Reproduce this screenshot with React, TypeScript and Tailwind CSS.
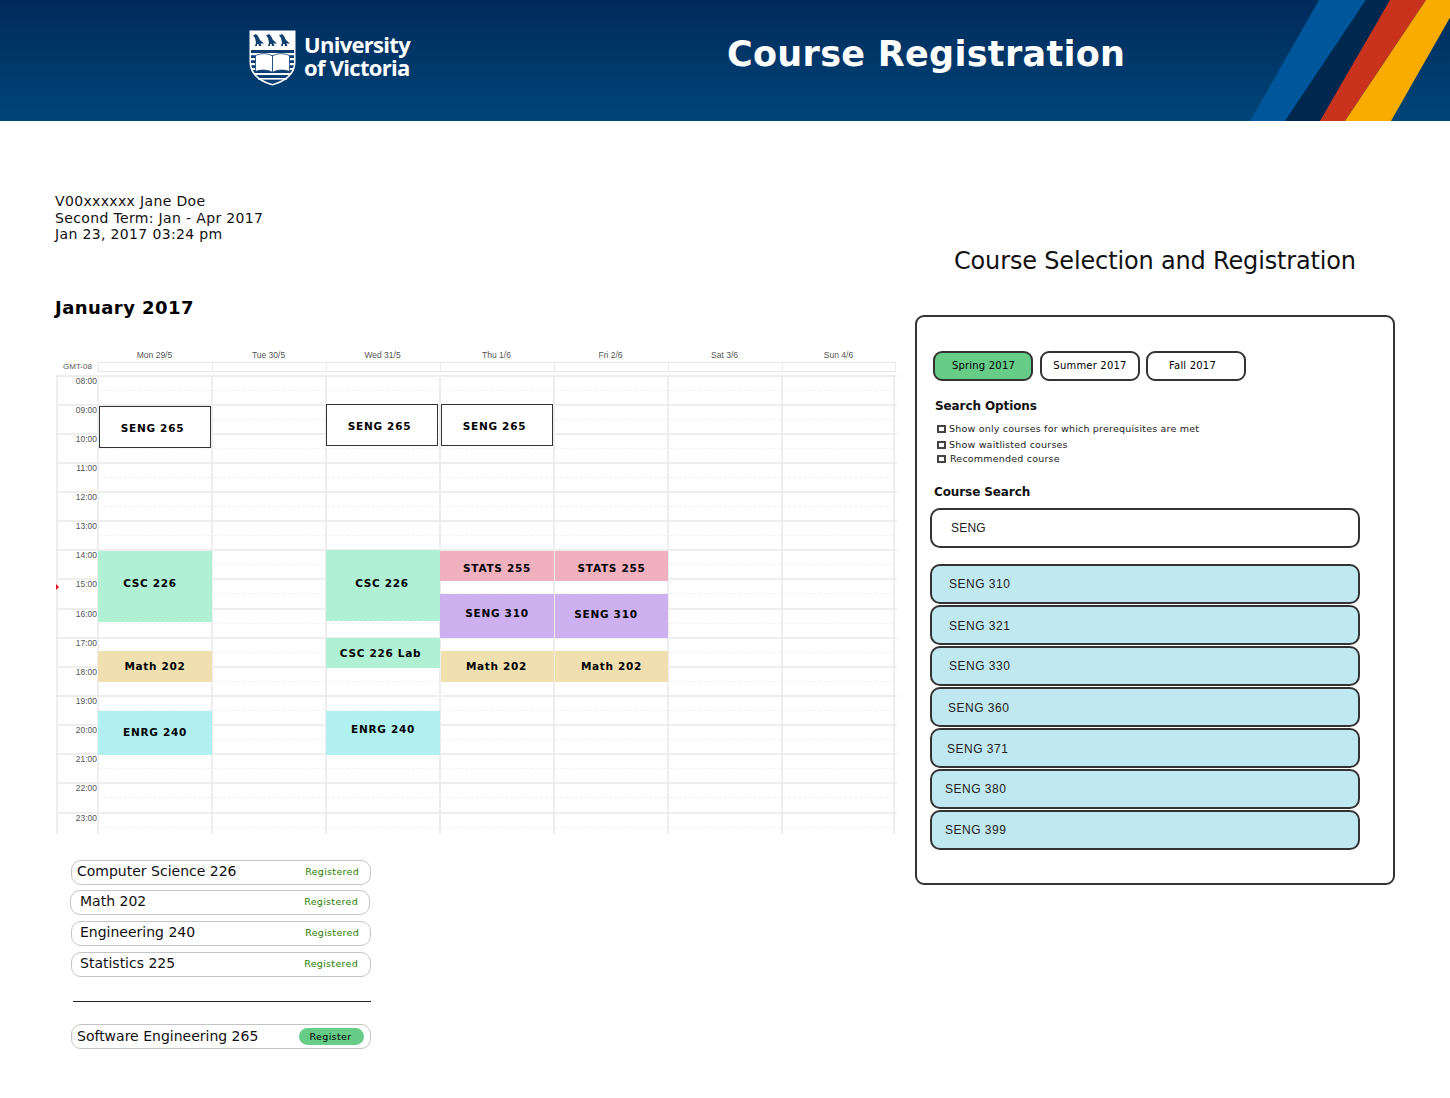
const hours = ["08:00","09:00","10:00","11:00","12:00","13:00","14:00","15:00","16:00","17:00","18:00","19:00","20:00","21:00","22:00","23:00"];
const days = ["Mon 29/5","Tue 30/5","Wed 31/5","Thu 1/6","Fri 2/6","Sat 3/6","Sun 4/6"];

// positions are relative to the grid body, which starts at x=58 y=376
const events = [
  { label: "SENG 265", box: "left-[41px] top-[31px] w-[112px] h-[42px] bg-white border-[1.5px] border-[#333]", text: "pr-[5px] pt-[4px]" },
  { label: "SENG 265", box: "left-[268px] top-[29px] w-[112px] h-[42px] bg-white border-[1.5px] border-[#333]", text: "pr-[5px] pt-[4px]" },
  { label: "SENG 265", box: "left-[383px] top-[29px] w-[112px] h-[42px] bg-white border-[1.5px] border-[#333]", text: "pr-[5px] pt-[4px]" },
  { label: "CSC 226", box: "left-[40px] top-[176px] w-[114px] h-[71px] bg-[#b0f0d5]", text: "pr-[10px] pb-[5px]" },
  { label: "CSC 226", box: "left-[268px] top-[175px] w-[114px] h-[71px] bg-[#b0f0d5]", text: "pr-[2px] pb-[3px]" },
  { label: "STATS 255", box: "left-[382px] top-[176px] w-[114px] h-[30px] bg-[#f0b0bd]", text: "pt-[6px]" },
  { label: "STATS 255", box: "left-[497px] top-[176px] w-[113px] h-[30px] bg-[#f0b0bd]", text: "pt-[6px]" },
  { label: "SENG 310", box: "left-[382px] top-[219px] w-[114px] h-[44px] bg-[#ccb0f0]", text: "pb-[3px]" },
  { label: "SENG 310", box: "left-[497px] top-[219px] w-[113px] h-[44px] bg-[#ccb0f0]", text: "pr-[11px] pb-[1px]" },
  { label: "CSC 226 Lab", box: "left-[268px] top-[263px] w-[114px] h-[30px] bg-[#b0f0d5]", text: "pr-[5px] pt-[2px]" },
  { label: "Math 202", box: "left-[40px] top-[276px] w-[114px] h-[31px] bg-[#f0e0b0]", text: "pt-[2px]" },
  { label: "Math 202", box: "left-[383px] top-[276px] w-[113px] h-[31px] bg-[#f0e0b0]", text: "pr-[2px] pt-[2px]" },
  { label: "Math 202", box: "left-[497px] top-[276px] w-[113px] h-[31px] bg-[#f0e0b0]", text: "pt-[2px]" },
  { label: "ENRG 240", box: "left-[40px] top-[336px] w-[114px] h-[44px] bg-[#b0f0f0]", text: "" },
  { label: "ENRG 240", box: "left-[268px] top-[336px] w-[114px] h-[44px] bg-[#b0f0f0]", text: "pb-[6px]" },
];

const registered = [
  { name: "Computer Science 226", row: "ml-[16px] mt-0", name2: "pl-[5px]", tag: "pr-[11px]" },
  { name: "Math 202", row: "ml-[15px] mt-[5px]", name2: "pl-[9px]", tag: "pr-[11px]" },
  { name: "Engineering 240", row: "ml-[16px] mt-[6px]", name2: "pl-[8px]", tag: "pr-[11px]" },
  { name: "Statistics 225", row: "ml-[16px] mt-[6px]", name2: "pl-[8px]", tag: "pr-[12px]" },
];

const results = [
  { name: "SENG 310", cls: "mt-[16px] pl-[17px] pb-[1px]" },
  { name: "SENG 321", cls: "mt-[1px] pl-[17px] pt-[1px]" },
  { name: "SENG 330", cls: "mt-[1px] pl-[17px]" },
  { name: "SENG 360", cls: "mt-[1px] pl-[16px] pt-[2px]" },
  { name: "SENG 371", cls: "mt-[1px] pl-[15px] pt-[1px]" },
  { name: "SENG 380", cls: "mt-[1px] pl-[13px]" },
  { name: "SENG 399", cls: "mt-[1px] pl-[13px]" },
];

function Shield() {
  return (
    <svg width="47" height="56" viewBox="0 0 47 56" className="shrink-0">
      <path d="M0.5 0.5H46.5V32C46.5 45 36 52 23.5 55.5C11 52 0.5 45 0.5 32Z" fill="#fff" />
      <path d="M2 20H45V32C45 44 35 50.5 23.5 54C12 50.5 2 44 2 32Z" fill="#0b3f74" />
      <g fill="#fff">
        <rect x="2" y="23" width="43" height="2.2" />
        <rect x="2" y="28" width="43" height="2.2" />
        <rect x="2" y="33" width="43" height="2.2" />
        <rect x="3" y="38" width="41" height="2" />
        <rect x="5" y="43" width="37" height="2" />
        <rect x="9" y="48" width="29" height="1.6" />
      </g>
      <path d="M6.5 25.5C12 23 19 23 23.5 26C28 23 35 23 40.5 25.5V41.5C35 39.5 28 39.5 23.5 42.5C19 39.5 12 39.5 6.5 41.5Z" fill="#fff" stroke="#0b3f74" strokeWidth="0.8" />
      <path d="M23.5 26V42.5" stroke="#0b3f74" strokeWidth="0.9" />
      <g fill="#12406f">
        <path d="M4 5.5L7 4L9 6L11 10L15 13.5L11.5 13.5L12.5 16H10L9.5 14H8L8 16H6L7 12.5L6 8Z" />
        <path d="M17 5.5L20 4L22 6L24 10L28 13.5L24.5 13.5L25.5 16H23L22.5 14H21L21 16H19L20 12.5L19 8Z" />
        <path d="M30 5.5L33 4L35 6L37 10L41 13.5L37.5 13.5L38.5 16H36L35.5 14H34L34 16H32L33 12.5L32 8Z" />
      </g>
    </svg>
  );
}

function Stripes() {
  return (
    <svg width="210" height="121" viewBox="1240 0 210 121" className="absolute right-0 top-0">
      <polygon points="1319,0 1366,0 1285,121 1250,121" fill="#00569a" />
      <polygon points="1366,0 1390,0 1320,121 1285,121" fill="#00284f" />
      <polygon points="1390,0 1426,0 1345,121 1320,121" fill="#c9321c" />
      <polygon points="1426,0 1460,0 1391,121 1345,121" fill="#f9ab00" />
    </svg>
  );
}

function Calendar() {
  return (
    <div className="w-[841px] ml-[1px] text-[#666] font-['Liberation_Sans',sans-serif]">
      <div className="flex pl-[42px] h-[13px] text-[8.5px] leading-[13px]">
        {days.map((d) => (
          <div key={d} className="w-[114px] text-center pr-[1px] text-[#555]">{d}</div>
        ))}
      </div>
      <div className="flex h-[11px] mt-[-1px]">
        <div className="w-[42px] pl-[7px] text-[8px] leading-[11px] text-[#555]">GMT-08</div>
        <div className="flex h-[10px] mt-[1px] border border-[#e8e8e8]">
          {days.map((d) => (
            <div key={d} className="w-[114px] border-r border-[#e8e8e8] last:border-r-0 last:w-[112px]" />
          ))}
        </div>
      </div>
      <div className="relative mt-[3px] border-l-2 border-[#eee] box-border">
        <div>
          {hours.map((h) => (
            <div key={h} className="flex h-[29.15px] last:h-[22px] border-t-2 border-[#eee] box-border">
              <div className="w-[39px] text-right text-[8.5px] leading-[8px] text-[#555]">{h}</div>
              {days.map((d) => (
                <div key={d} className="w-[114px] border-l-2 border-[#eee] last:border-r-2 box-border">
                  <div className="h-[14px] border-b border-dashed border-[#f2f2f2]" />
                </div>
              ))}
            </div>
          ))}
        </div>
        <div className="absolute left-[-2px] top-[209px] h-0 w-0 border-y-[3px] border-l-[3px] border-y-transparent border-l-[#e01020]" />
        {events.map((e, i) => (
          <div
            key={i}
            className={`absolute flex items-center justify-center box-border text-[10.5px] font-bold tracking-[0.7px] text-black font-['DejaVu_Sans',sans-serif] ${e.box} ${e.text}`}
          >
            {e.label}
          </div>
        ))}
      </div>
    </div>
  );
}

export default function App() {
  return (
    <div className="w-[1450px] h-[1098px] bg-white overflow-hidden font-['DejaVu_Sans',sans-serif] text-black">
      <header className="relative h-[121px] bg-gradient-to-b from-[#002a5c] to-[#004578] overflow-hidden flex items-center">
        <div className="flex items-center ml-[249px] mt-[-6px]">
          <Shield />
          <div className="ml-[8px] mt-[-4px] font-['Open_Sans',sans-serif] font-bold text-[22px] leading-[23px] tracking-[-0.7px] text-white">
            University<br />of Victoria
          </div>
        </div>
        <h1 className="ml-[317px] mt-[-12px] text-[35px] font-bold tracking-[0.3px] text-white">Course Registration</h1>
        <Stripes />
      </header>

      <div className="flex">
        <div className="w-[915px] pl-[55px] pt-[72px] shrink-0">
          <div className="text-[14px] leading-[16.5px] tracking-[0.35px] text-[#111]">
            <div>V00xxxxxx Jane Doe</div>
            <div>Second Term: Jan - Apr 2017</div>
            <div>Jan 23, 2017 03:24 pm</div>
          </div>
          <h2 className="mt-[53px] text-[18px] leading-[24px] font-bold tracking-[0.45px]">January 2017</h2>
          <div className="mt-[29px]">
            <Calendar />
          </div>
          <div className="mt-[26px] w-[320px]">
            {registered.map((r) => (
              <div key={r.name} className={`w-[300px] h-[25px] box-border flex items-center justify-between rounded-[10px] border border-[#c4c4c4] ${r.row}`}>
                <span className={`text-[14px] pb-[1px] text-[#111] ${r.name2}`}>{r.name}</span>
                <span className={`text-[9.5px] pt-[1px] tracking-[0.3px] text-[#2a8000] ${r.tag}`}>Registered</span>
              </div>
            ))}
            <div className="ml-[18px] mt-[24px] w-[298px] border-t border-[#222]" />
            <div className="ml-[16px] mt-[22px] w-[300px] h-[25px] box-border flex items-center justify-between rounded-[10px] border border-[#c4c4c4]">
              <span className="pl-[5px] text-[14px] text-[#111]">Software Engineering 265</span>
              <span className="mr-[6px] w-[65px] h-[17px] pr-[2px] rounded-full bg-[#66cc88] text-center text-[9.5px] leading-[17px] tracking-[0.35px]">Register</span>
            </div>
          </div>
        </div>

        <div className="w-[480px] shrink-0">
          <h2 className="mt-[122px] ml-[39px] text-[24px] leading-[36px] tracking-[-0.16px] whitespace-nowrap text-[#111]">Course Selection and Registration</h2>
          <section className="mt-[36px] h-[570px] box-border rounded-[9px] border-2 border-[#333] pl-[13px] pt-[34px]">
            <div className="flex gap-[7px] ml-[3px]">
              <div className="w-[100px] h-[30px] box-border rounded-[9px] border-2 border-[#333] bg-[#66cc88] text-center text-[10px] leading-[26px] tracking-[0.2px] pl-[1px]">Spring 2017</div>
              <div className="w-[100px] h-[30px] box-border rounded-[9px] border-2 border-[#333] text-center text-[10px] leading-[26px] tracking-[0.2px]">Summer 2017</div>
              <div className="w-[100px] h-[30px] box-border rounded-[9px] border-2 border-[#333] text-center text-[10px] leading-[26px] tracking-[0.2px] pr-[7px] ml-[-1px]">Fall 2017</div>
            </div>
            <h3 className="mt-[17px] ml-[5px] text-[12px] leading-[16px] font-bold tracking-[-0.1px] text-[#111]">Search Options</h3>
            <div className="mt-[8px] ml-[7px] text-[9.5px] tracking-[0.2px] text-[#222]">
              <label className="flex items-center h-[14px]"><span className="w-[9px] h-[8px] box-border border-2 border-[#444] mr-[3px]" />Show only courses for which prerequisites are met</label>
              <label className="flex items-center h-[14px] mt-[2px]"><span className="w-[9px] h-[8px] box-border border-2 border-[#444] mr-[3px]" />Show waitlisted courses</label>
              <label className="flex items-center h-[14px]"><span className="w-[9px] h-[8px] box-border border-2 border-[#444] mr-[4px]" />Recommended course</label>
            </div>
            <h3 className="mt-[18px] ml-[4px] text-[12px] leading-[16px] font-bold tracking-[-0.1px] text-[#111]">Course Search</h3>
            <div className="mt-[8px] w-[430px] h-[40px] box-border rounded-[10px] border-2 border-[#333] flex items-center pl-[19px] text-[12px] font-['Liberation_Sans',sans-serif] tracking-[0.2px] text-[#222]">SENG</div>
            {results.map((r) => (
              <div key={r.name} className={`w-[430px] h-[40px] box-border rounded-[10px] border-2 border-[#333] bg-[#c0e8f0] flex items-center text-[12px] font-['Liberation_Sans',sans-serif] tracking-[0.5px] text-[#222] ${r.cls}`}>{r.name}</div>
            ))}
          </section>
        </div>
      </div>
    </div>
  );
}
